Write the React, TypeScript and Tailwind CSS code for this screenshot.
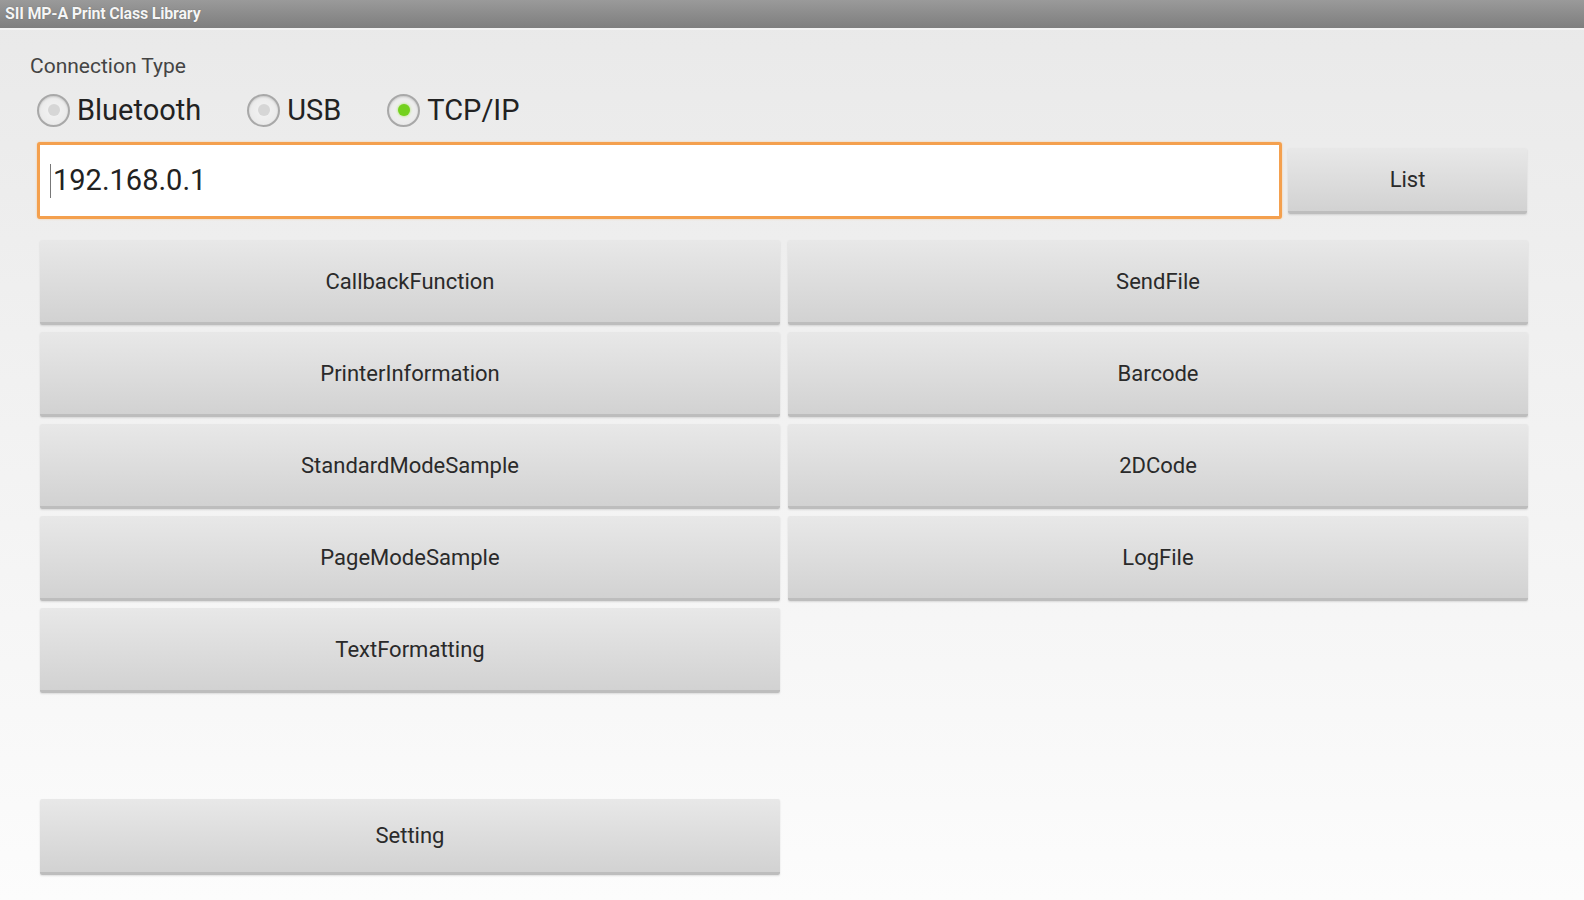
import React from "react";

function Radio({ label, checked }: { label: string; checked?: boolean }) {
  return (
    <div className="flex items-center gap-[7px]">
      <div className="w-[33px] h-[33px] rounded-full border-[2px] border-[#a8a8a8] bg-[radial-gradient(circle,#f4f4f4_0%,#e6e6e6_100%)] flex items-center justify-center shadow-[inset_0_1px_2px_rgba(0,0,0,0.15)]">
        {checked ? (
          <div className="w-[12px] h-[12px] rounded-full bg-[#74d11e] shadow-[0_0_3px_#9be04e]" />
        ) : (
          <div className="w-[12px] h-[12px] rounded-full bg-[#d6d6d6]" />
        )}
      </div>
      <span className="text-[29px] text-[#222] leading-none">{label}</span>
    </div>
  );
}

function Btn({ label, className = "" }: { label: string; className?: string }) {
  return (
    <div
      className={
        "flex items-center justify-center rounded-[2px] bg-gradient-to-b from-[#e8e8e8] to-[#d2d2d2] border-b-[3px] border-[#bdbdbd] shadow-[0_1px_2px_rgba(0,0,0,0.12)] text-[22px] text-[#2a2a2a] " +
        className
      }
    >
      {label}
    </div>
  );
}

export default function App() {
  const left = ["CallbackFunction", "PrinterInformation", "StandardModeSample", "PageModeSample", "TextFormatting"];
  const right = ["SendFile", "Barcode", "2DCode", "LogFile"];
  return (
    <div
      className="w-[1584px] h-[900px] overflow-hidden flex flex-col bg-gradient-to-b from-[#e9e9e9] to-[#fcfcfc]"
      style={{ fontFamily: "Roboto, 'Liberation Sans', sans-serif" }}
    >
      <div className="h-[30px] shrink-0 bg-gradient-to-b from-[#9a9a9a] to-[#7e7e7e] border-b-[2px] border-[#f2f2f2] flex items-center pl-[5px]">
        <span className="text-[16px] font-bold text-[#f5f5f5] tracking-[-0.2px] [text-shadow:0_0_1px_rgba(0,0,0,0.4)]">SII MP-A Print Class Library</span>
      </div>

      <div className="pl-[30px] mt-[23px] text-[21px] text-[#444] leading-[26px]">Connection Type</div>

      <div className="flex items-center pl-[37px] mt-[11px] h-[40px] gap-[46px]">
        <Radio label="Bluetooth" />
        <Radio label="USB" />
        <Radio label="TCP/IP" checked />
      </div>

      <div className="flex items-center pl-[37px] mt-[12px] gap-[6px]">
        <div className="w-[1245px] h-[77px] bg-white border-[3px] border-[#f4a04e] rounded-[3px] flex items-center pl-[10px] shadow-[0_0_2px_#f8c58f]">
          <div className="w-[1px] h-[34px] bg-[#777] mr-[2px]" />
          <span className="text-[29px] text-[#222]">192.168.0.1</span>
        </div>
        <Btn label="List" className="w-[239px] h-[66px]" />
      </div>

      <div className="grid grid-cols-[740px_740px] gap-x-[8px] gap-y-[7px] pl-[40px] mt-[21px]">
        {[0, 1, 2, 3, 4].map((i) => (
          <React.Fragment key={i}>
            <Btn label={left[i]} className="h-[85px]" />
            {right[i] ? <Btn label={right[i]} className="h-[85px]" /> : <div />}
          </React.Fragment>
        ))}
      </div>

      <div className="pl-[40px] mt-[106px]">
        <Btn label="Setting" className="w-[740px] h-[76px]" />
      </div>
    </div>
  );
}
